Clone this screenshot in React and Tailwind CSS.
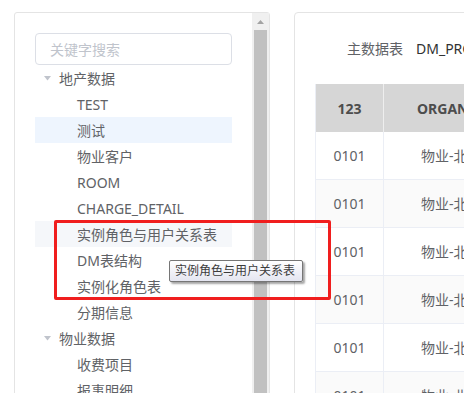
import React from "react";

const font = { fontFamily: '"Noto Sans", "Noto Sans CJK SC", sans-serif' };

function Caret() {
  return (
    <svg width="7" height="5" viewBox="0 0 7 5" className="shrink-0">
      <path d="M0 0 L7 0 L3.5 4.5 Z" fill="#c0c4cc" />
    </svg>
  );
}

const tree = [
  { label: "地产数据", level: 1 },
  { label: "TEST", level: 2 },
  { label: "测试", level: 2, active: true },
  { label: "物业客户", level: 2 },
  { label: "ROOM", level: 2 },
  { label: "CHARGE_DETAIL", level: 2 },
  { label: "实例角色与用户关系表", level: 2, hover: true },
  { label: "DM表结构", level: 2 },
  { label: "实例化角色表", level: 2 },
  { label: "分期信息", level: 2 },
  { label: "物业数据", level: 1 },
  { label: "收费项目", level: 2 },
  { label: "报事明细", level: 2 },
];

export default function App() {
  return (
    <div
      className="relative w-[464px] h-[393px] overflow-hidden bg-white flex pt-[12px] pl-[14px] gap-[24px]"
      style={font}
    >
      {/* Left panel */}
      <div className="w-[256px] h-[420px] shrink-0 border border-[#e4e4e4] rounded-[3px] flex">
        <div className="flex-1 pl-[20px] pt-[20px]">
          <div className="w-[197px] h-[32px] border border-[#dcdfe6] rounded-[4px] flex items-center pl-[14px] text-[14px] text-[#c0c4cc]">
            关键字搜索
          </div>
          <div className="w-[197px]">
            {tree.map((it, i) => (
              <div
                key={i}
                className={
                  "h-[26px] flex items-center text-[14px] text-[#606266] whitespace-nowrap " +
                  (it.active ? "bg-[#eef5fe] " : "") +
                  (it.hover ? "bg-[#f5f7fa] " : "")
                }
              >
                {it.level === 1 ? (
                  <div className="flex items-center">
                    <span className="w-[9px]" />
                    <Caret />
                    <span className="ml-[8px]">{it.label}</span>
                  </div>
                ) : (
                  <span className="pl-[42px]">{it.label}</span>
                )}
              </div>
            ))}
          </div>
        </div>
        <div className="w-[17px] bg-[#f0f0f0] flex flex-col items-center">
          <div className="h-[17px] w-full flex items-center justify-center">
            <svg width="7" height="4" viewBox="0 0 7 4">
              <path d="M3.5 0 L7 4 L0 4 Z" fill="#a3a3a3" />
            </svg>
          </div>
          <div className="w-[13px] flex-1 bg-[#c1c1c1]" />
        </div>
      </div>

      {/* Right panel */}
      <div className="w-[300px] h-[420px] shrink-0 border border-[#e4e4e4] rounded-[4px] pl-[20px] pt-[25px]">
        <div className="h-[20px] flex items-center text-[14px] whitespace-nowrap pl-[32px]">
          <span className="text-[#606266]">主数据表</span>
          <span className="ml-[13px] text-[#303133]">DM_PROJECT_INFO</span>
        </div>
        <div className="mt-[26px] border-l border-[#ebeef5]">
          <div className="flex h-[48px] bg-[#d6d6d6] text-[14px] font-bold text-[#4d4d4d]">
            <div className="w-[68px] flex items-center justify-center border-r border-[#eeeeee]">123</div>
            <div className="flex-1 flex items-center pl-[33px] whitespace-nowrap">ORGANIZATION</div>
          </div>
          {[0, 1, 2, 3, 4, 5].map((r) => (
            <div
              key={r}
              className={
                "flex h-[48px] text-[14px] text-[#606266] border-b border-[#ebeef5] " +
                (r % 2 === 1 ? "bg-[#fafafa]" : "bg-white")
              }
            >
              <div className="w-[68px] flex items-center justify-center border-r border-[#ebeef5]">0101</div>
              <div className="flex-1 flex items-center pl-[37px] whitespace-nowrap">物业-北京公司</div>
            </div>
          ))}
        </div>
      </div>

      {/* Red highlight box */}
      <div className="absolute left-[54px] top-[220px] w-[277px] h-[80px] border-[3px] border-[#f01e1e] rounded-[2px] pointer-events-none" />

      {/* Tooltip */}
      <div
        className="absolute left-[169px] top-[260px] w-[134px] h-[22px] border border-[#767676] rounded-[2px] flex items-center pl-[5px] text-[12px] text-[#3c3c3c] whitespace-nowrap bg-gradient-to-b from-white to-[#e4e5f0] shadow-[2px_2px_2px_rgba(0,0,0,0.35)]"
      >
        实例角色与用户关系表
      </div>
    </div>
  );
}
